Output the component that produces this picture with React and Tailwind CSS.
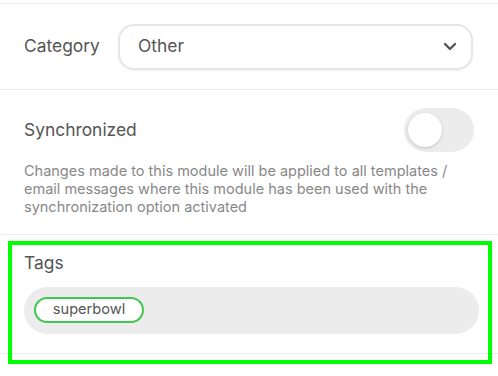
import React from "react";

/* Chevron for the select */
function Chevron() {
  return (
    <svg width="14" height="9" viewBox="0 0 14 9" fill="none">
      <path
        d="M2 2l5 5 5-5"
        stroke="#555"
        strokeWidth="2.4"
        strokeLinecap="round"
        strokeLinejoin="round"
      />
    </svg>
  );
}

export default function App() {
  return (
    <div
      className="relative w-[498px] h-[376px] bg-white overflow-hidden pt-[3px]"
      style={{ fontFamily: "Inter, 'Liberation Sans', sans-serif" }}
    >
      {/* Category */}
      <div className="border-t border-[#ececec] h-[86px] flex items-center pl-6 pr-[25px]">
        <span className="w-[94px] shrink-0 text-[17.4px] text-[#555]">Category</span>
        <div className="flex-1 h-[46px] border-2 border-[#e6e6e6] rounded-[16px] shadow-[0_1px_2px_rgba(0,0,0,0.06)] flex items-center justify-between pl-[18px] pr-[14px]">
          <span className="text-[17.4px] text-[#555]">Other</span>
          <Chevron />
        </div>
      </div>

      {/* Synchronized */}
      <div className="border-t border-[#ececec] pt-[18px] pb-[18px] pl-6 pr-[24px]">
        <div className="flex items-center justify-between">
          <span className="text-[17.4px] text-[#555]">Synchronized</span>
          <div className="w-[70px] h-[44px] rounded-full bg-[#ececec] flex items-center pl-[4px]">
            <div className="w-[34px] h-[34px] rounded-full bg-white shadow-[0_1px_3px_rgba(0,0,0,0.18)]" />
          </div>
        </div>
        <p className="mt-[10px] text-[14.5px] leading-[18px] text-[#888]">
          Changes made to this module will be applied to all templates /
          email messages where this module has been used with the
          synchronization option activated
        </p>
      </div>

      {/* Tags */}
      <div className="border-t border-b border-[#ececec] pt-4 pb-[19px] pl-6 pr-[19px]">
        <div className="text-[17.4px] leading-6 text-[#555]">Tags</div>
        <div className="mt-3 h-[47px] rounded-full bg-[#ececec] flex items-start pl-[10px] pt-[10px]">
          <span className="w-[110px] h-[26px] rounded-full border-2 border-[#3ec850] bg-white flex items-center justify-center text-[14.6px] text-[#555]">
            superbowl
          </span>
        </div>
      </div>

      {/* highlight overlay */}
      <div className="absolute left-[8px] top-[241px] w-[484px] h-[123px] border-4 border-[#00ff00] pointer-events-none" />
    </div>
  );
}
